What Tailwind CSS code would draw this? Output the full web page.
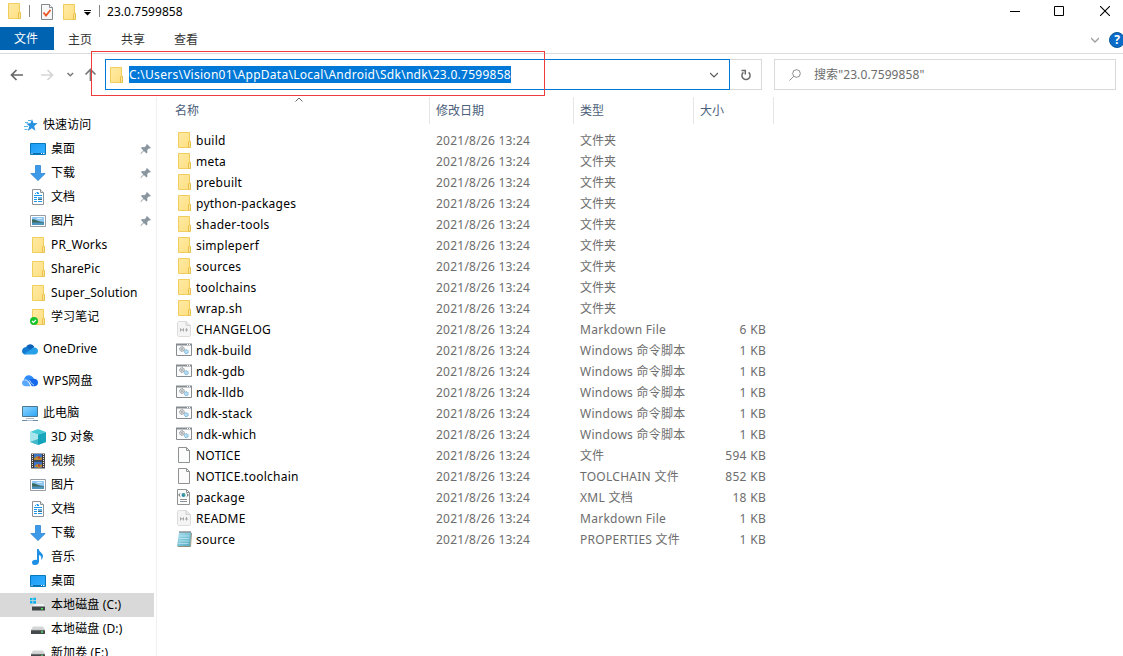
<!DOCTYPE html>
<html lang="zh-CN">
<head>
  <meta charset="utf-8" />
  <meta name="viewport" content="width=device-width, initial-scale=1.0" />
  <title>23.0.7599858</title>
  <script src="https://cdn.jsdelivr.net/npm/@tailwindcss/browser@4"></script>
</head>
<body class="bg-white font-['Noto_Sans','Noto_Sans_CJK_SC',sans-serif] text-[12px] text-black">
  <!-- icon sprites -->
  <svg class="absolute w-0 h-0">
    <defs>
      <linearGradient id="gFolder" x1="0" y1="0" x2="1" y2="1"><stop offset="0" stop-color="#ffeaa4" /><stop offset="1" stop-color="#ffdf82" /></linearGradient>
      <linearGradient id="gDesk" x1="0" y1="0" x2="1" y2="1"><stop offset="0" stop-color="#1a9bf5" /><stop offset="1" stop-color="#35b0ff" /></linearGradient>
      <linearGradient id="gScreen" x1="0" y1="0" x2="1" y2="1"><stop offset="0" stop-color="#8fd6ff" /><stop offset="1" stop-color="#2ba4f5" /></linearGradient>
      <linearGradient id="gPad" x1="0" y1="0" x2="1" y2="1"><stop offset="0" stop-color="#a9e0f0" /><stop offset="1" stop-color="#4fa6bd" /></linearGradient>
    </defs>
    <symbol id="folder" viewBox="0 0 16 16">
      <path d="M2.500.5h11v15h-11z" fill="url(#gFolder)" stroke="#f0cd5c" />
      <path d="M12.500 15.500v-5.500l.7-.7h1.300v6.200z" fill="#ffe597" stroke="#e6c04c" />
    </symbol>
    <symbol id="folder-ok" viewBox="0 0 16 16">
      <use href="#folder" />
      <circle cx="4" cy="12" r="4" fill="#16c22c" />
      <path d="M2 12l1.500 1.500L6 10.800" fill="none" stroke="#fff" stroke-width="1.200" />
    </symbol>
    <symbol id="star" viewBox="0 0 16 16">
      <path d="M10 2l1.400 4 4.300.2-3.500 2.700 1.200 4.800-3.600-2.500-4 2.800 1.500-4.800-3-2.700 4.100-.2z" fill="#2791e0" />
      <path d="M6 3.500h3M3 5.500h3M2 9.500h4M2.500 12.500h3" stroke="#58b4e2" />
    </symbol>
    <symbol id="desktop" viewBox="0 0 16 16">
      <path d="M.5 2.500h15v11H.5z" fill="url(#gDesk)" stroke="#0878bd" />
      <path d="M1 12.500h14" stroke="#086fae" />
      <path d="M1.500 12.500h1M11 12.500h1M13 12.500h1.500" stroke="#fff" />
    </symbol>
    <symbol id="down" viewBox="0 0 16 16">
      <path d="M5.500.5h5v8h4.700L8 15.600.8 8.500h4.700z" fill="#3d9ae8" stroke="#2c84d2" stroke-width=".8" />
    </symbol>
    <symbol id="doc" viewBox="0 0 16 16">
      <path d="M2.500.5h8l3 3v12h-11z" fill="#fff" stroke="#8d9499" />
      <path d="M10.500.5v3h3" fill="#eee" stroke="#8d9499" />
      <path d="M6.500 3.500h2M5 4.500h1M7 4.500h2M4 6.500h8M4 8.500h3M4 10.500h3M4 12.500h3" stroke="#1b9af0" />
      <path d="M8 8h4v2H8z" fill="#62b4ea" /><path d="M8 10.500h4" stroke="#4b6770" /><path d="M8 12.500h4" stroke="#1b9af0" />
    </symbol>
    <symbol id="picture" viewBox="0 0 16 16">
      <path d="M.5 2.500h15v11H.5z" fill="#fff" stroke="#979da2" />
      <path d="M2 4h12v8H2z" fill="#8fc7f5" />
      <path d="M2 6.500c3-1 5 2.200 12 2.500v1H2z" fill="#3c6b62" /><path d="M2 9.500h12V12H2z" fill="#4c93bd" />
      <path d="M7 5.500h5" stroke="#d8ecfc" />
    </symbol>
    <symbol id="onedrive" viewBox="0 0 16 16">
      <path d="M4 6.500C5.500 2.500 10.500 2 12.300 6L9 10 2 8z" fill="#0b62b8" />
      <path d="M3.500 6.200C1.500 6.300 0 8 0 10c0 2.300 1.600 3.500 3.500 3.500L11 10 6 6.800c-.8-.4-1.600-.6-2.500-.6z" fill="#127ad1" />
      <path d="M12.500 6.500c-1.600 0-2.500.8-3.300 1.800L2 13c.5.300 1 .5 1.500.5h9c2 0 3.500-1.300 3.500-3.500 0-2-1.600-3.500-3.500-3.500z" fill="#279fe8" />
    </symbol>
    <symbol id="wps" viewBox="0 0 16 16">
      <path d="M2 7C2.300 1.500 9 .5 11.300 4.800 12 6 12 7 12 7L7 8z" fill="#2f8cf8" />
      <path d="M12.500 5.800C15 6 16 7.800 16 9.700c0 2-1.500 3.500-3.500 3.500H9.800L6.500 7.500C8 5 10.500 5.700 12.500 5.800z" fill="#1569ec" />
      <path d="M3.500 6.500C1.200 6.700 0 8.200 0 10c0 2 1.500 3.200 3.500 3.200h5.200L6.500 8C5.700 6.900 4.600 6.400 3.500 6.500z" fill="#58a8fb" />
      <path d="M2.500 7c3.500-.8 4.500 3.500 6.500 6.300M7.500 7c1 2 2 4 4.500 5.200" stroke="#fff" fill="none" stroke-width=".7" />
    </symbol>
    <symbol id="pc" viewBox="0 0 16 16">
      <path d="M.5 1.500h15v10H.5z" fill="url(#gScreen)" stroke="#4b7891" />
      <path d="M4 13.500h8" stroke="#aebbc4" /><path d="M0 15.500h16" stroke="#6d8ca1" /><path d="M5 15.500h6" stroke="#b4c4cf" />
    </symbol>
    <symbol id="cube" viewBox="0 0 16 16">
      <path d="M8 0l8 3-8 2.500L0 3z" fill="#45cbd6" /><path d="M0 3l8 2.500V16l-8-3z" fill="#a6e6ec" />
      <path d="M16 3L8 5.500V16l8-3z" fill="#18a6bd" /><path d="M0 13l8-3 8 3-8 3z" fill="#0d9fba" opacity=".65" />
    </symbol>
    <symbol id="video" viewBox="0 0 16 16">
      <path d="M1 .5h14v15H1z" fill="#4b4648" />
      <path d="M2.500 1v14M13.500 1v14" stroke="#e6e6e6" stroke-dasharray="1 1" />
      <path d="M4 1h8v6.500H4zM4 8.500h8V15H4z" fill="#3d73c5" />
      <path d="M4 5.500l3-2.500 2 2 3-1v3H4zM4 13.500l3-2.500 3 1 2-1v3l-3 1z" fill="#b98a32" /><path d="M8 3.500h2v2H8zM8 11.500h2v2H8z" fill="#c53a2c" />
      <path d="M3.500 1v14M12.500 1v14M3 8h10" stroke="#3b3637" fill="none" />
    </symbol>
    <symbol id="music" viewBox="0 0 16 16">
      <path d="M7 0h1.700c.4 3 4.300 4 4.300 7 0 1.700-.8 3-2 4 .8-2.700.3-4.400-2-5v6.500C9 15 6.800 16 5 16s-3-1-3-2.600C2 11.500 4.400 10.300 7 11z" fill="#1e90e6" />
    </symbol>
    <symbol id="disk" viewBox="0 0 16 16">
      <path d="M3 5.500h10l2 3.500H1z" fill="#d3d5d6" /><path d="M1 9h14v4H1z" fill="#45494b" />
      <path d="M1 9.400h14" stroke="#777b7d" stroke-width=".8" /><path d="M11 11h2" stroke="#4be65b" stroke-width="1.500" />
    </symbol>
    <symbol id="disk-win" viewBox="0 0 16 16">
      <path d="M4 7h9l2 2.500H2z" fill="#f1f2f3" /><path d="M2 9.500h13v4H2z" fill="#3f4446" /><path d="M11 11.700h2" stroke="#4be65b" stroke-width="1.500" />
      <path d="M0 1h2.500v2.300H0zM3.300.7H6v2.600H3.300zM0 4.100h2.500v2.300H0zM3.300 4.100H6v2.600H3.300z" fill="#10b3ee" />
    </symbol>
    <symbol id="pin" viewBox="0 0 12 12">
      <path d="M7 1l4 4-1.300.6-.9-.1-1.600 1.600.2 2.300-1 1.100-2.500-2.600L1 11l-.5-.4L3.300 7.500 1 5l1-1 2.400.3L6.200 2.800 6.200 1.800z" fill="#8a969f" />
    </symbol>
    <symbol id="md" viewBox="0 0 16 16">
      <path d="M1.500 2c0-1 .5-1.500 1.500-1.500h7l4.500 4V14c0 1-.5 1.500-1.500 1.500H3c-1 0-1.500-.5-1.500-1.500z" fill="#f4f4f4" stroke="#dcdcdc" />
      <path d="M10 .5v4h4.500" fill="#e7e7e7" stroke="#d3d3d3" />
      <path d="M4.500 10.500v-3l1.500 2 1.500-2v3M10.500 7v3.500M9 9h3" fill="none" stroke="#a9a9a9" />
    </symbol>
    <symbol id="bat" viewBox="0 0 16 16">
      <path d="M.5 2.500h15v11H.5z" fill="#fcfcfc" stroke="#868c90" /><path d="M0 2.500h16" stroke="#868c90" stroke-width="2" /><path d="M11 2.500h1M13 2.500h1" stroke="#fff" />
      <circle cx="6" cy="7" r="2.300" fill="#dfe1e2" stroke="#7d8488" stroke-dasharray="1.200 .4" /><circle cx="6" cy="7" r=".8" fill="#7d8488" />
      <circle cx="10.300" cy="9.700" r="2" fill="#b5dcf2" stroke="#6fadd2" stroke-dasharray="1.200 .4" />
    </symbol>
    <symbol id="file" viewBox="0 0 16 16">
      <path d="M2.500.5h8l3 3v12h-11z" fill="#fcfcfc" stroke="#8e9293" /><path d="M10.500.5v3h3" fill="none" stroke="#8e9293" />
    </symbol>
    <symbol id="xml" viewBox="0 0 16 16">
      <path d="M1.500.5h9l3 3v12h-12z" fill="#fcfcfc" stroke="#8e9293" /><path d="M10.500.5v3h3" fill="none" stroke="#8e9293" />
      <path d="M4 4.500L2.800 6 4 7.500M11 4.500L12.200 6 11 7.500" fill="none" stroke="#4e5558" /><circle cx="7.500" cy="6" r="2" fill="#2d8bb5" /><path d="M7 5h1.500v1.500" stroke="#4ab26a" fill="none" />
      <path d="M4 10.500h7M4 12.500h7" stroke="#8a9092" />
    </symbol>
    <symbol id="notepad" viewBox="0 0 16 16">
      <path d="M3 1.500h12.500L14 15.500H1z" fill="url(#gPad)" /><path d="M15.500 2L14.500 15.500H2" fill="none" stroke="#8a7d62" stroke-width=".8" />
      <path d="M3.500 1h11" stroke="#4e5a60" stroke-width="2" stroke-dasharray="1 1" />
      <path d="M3.300 5h10M3 7.500h10M2.700 10h10M2.400 12.500h10" stroke="#d5f1f8" stroke-width=".6" />
    </symbol>
    <symbol id="check" viewBox="0 0 16 16">
      <path d="M2.500.5h8l3 3v12h-11z" fill="#f7f7f7" stroke="#84898c" /><path d="M10.500.5v3h3" fill="#fff" stroke="#84898c" />
      <path d="M4.500 8.500l2.500 3 4.500-5.500" fill="none" stroke="#ec5522" stroke-width="1.800" />
    </symbol>
  </svg>

  <div class="relative flex flex-col w-[1123px] h-[656px] overflow-hidden whitespace-nowrap">
    <header class="h-[27px] shrink-0 flex justify-between pl-1.5">
      <div class="flex items-center h-6">
        <svg class="w-4 h-4 -mt-0.5"><use href="#folder" /></svg>
        <span class="w-px h-3 bg-[#858585] ml-[7px] -mt-0.5"></span>
        <svg class="w-4 h-4 ml-[9px]"><use href="#check" /></svg>
        <svg class="w-4 h-4 ml-1.5"><use href="#folder" /></svg>
        <svg class="w-[7px] h-1.5 ml-[7px] mt-0.5" viewBox="0 0 7 6"><path d="M0 .5h7" stroke="#111" /><path d="M0 2h7L3.500 5.500z" /></svg>
        <span class="w-px h-3 bg-[#858585] ml-2 -mt-0.5"></span>
        <span class="ml-[7px] tracking-[0.05px]">23.0.7599858</span>
      </div>
      <div class="flex pt-1.5 pr-[13px] gap-[35px]">
        <svg class="w-2.5 h-2.5 -mr-px" viewBox="0 0 10 10"><path d="M0 5.500h10" stroke="#000" /></svg>
        <svg class="w-2.5 h-2.5 mr-px" viewBox="0 0 10 10"><path d="M.5.5h9v9h-9z" fill="none" stroke="#000" /></svg>
        <svg class="w-2.5 h-2.5" viewBox="0 0 10 10"><path d="M0 0l10 10M10 0L0 10" stroke="#000" stroke-width="1.100" /></svg>
      </div>
    </header>

    <nav class="h-[27px] shrink-0 flex border-b border-[#dadbdc] text-[#333]">
      <span class="w-[54px] h-[23px] bg-[#0063b1] text-white flex items-center justify-center pr-0.5">文件</span>
      <span class="h-[25px] flex items-center pl-3.5">主页</span>
      <span class="h-[25px] flex items-center pl-[29px]">共享</span>
      <span class="h-[25px] flex items-center pl-[29px]">查看</span>
      <div class="ml-auto flex items-start pt-[5px]">
        <svg class="w-2 h-5 mr-2.5 -mt-px" viewBox="0 0 8 20"><path d="M0 7l4 4 4-4" fill="none" stroke="#a0a0a0" stroke-width="1.300" /></svg>
        <div class="w-3.5 h-4 overflow-hidden">
          <div class="w-4 h-4 rounded-full bg-[#0a6cc8] border border-[#0c5899] text-white font-bold leading-[14px] text-center">?</div>
        </div>
      </div>
    </nav>

    <div class="h-[43px] shrink-0 flex items-start pt-[5px] text-[#6d6d6d]">
      <div class="w-[105px] h-8 flex items-center">
        <svg class="w-[105px] h-8" viewBox="0 0 105 32" fill="none" stroke-width="1.700">
          <path d="M23 16H12M16.500 11L11.500 16l5 5" stroke="#666" />
          <path d="M41 16h11M47.500 11l5 5-5 5" stroke="#d5d5d5" />
          <path d="M67.500 14l2.800 2.800 2.800-2.800" stroke="#777" stroke-width="1.500" />
          <path d="M90.500 22V11M85.500 15.500l5-5 5 5" stroke="#777" />
        </svg>
      </div>
      <div class="w-[625px] h-[31px] border border-[#0078d7] flex items-center pl-0.5 pr-[11px]">
        <svg class="w-4 h-4"><use href="#folder" /></svg>
        <span id="address" class="ml-[5px] h-[17px] leading-[17px] bg-[#0078d7] text-white tracking-[0.27px]">C:\Users\Vision01\AppData\Local\Android\Sdk\ndk\23.0.7599858</span>
        <svg class="w-2 h-5 ml-auto" viewBox="0 0 8 20"><path d="M0 8l4 4 4-4" fill="none" stroke="#555" stroke-width="1.200" /></svg>
      </div>
      <div class="w-8 h-[31px] border border-l-0 border-[#d9d9d9] flex items-center justify-center">
        <svg class="w-3 h-3" viewBox="0 0 12 12" fill="none" stroke="#6a6a6a" stroke-width="1.500"><path d="M3.400 3.300A4.100 4.100 0 1 0 8.600 3.300M1.500 1.400H5.300V5.500" /></svg>
      </div>
      <div class="w-[342px] h-[31px] ml-3 border border-[#d9d9d9] flex items-center pl-3.5">
        <svg class="w-3 h-3" viewBox="0 0 12 12" fill="none" stroke="#8b8b8b"><circle cx="7.500" cy="4.500" r="3.800" /><path d="M4.800 7.200L.5 11.500" /></svg>
        <span class="ml-[13px] tracking-[0.1px]">搜索"23.0.7599858"</span>
      </div>
    </div>

    <div class="flex-1 min-h-0 flex">
      <aside id="sidebar" class="w-[157px] shrink-0 pt-4 border-r border-[#f0f0f0] overflow-hidden"></aside>
      <main class="flex-1">
        <div class="relative h-[27px] flex items-center text-[#4c607a]">
          <svg class="absolute left-[138px] top-0 w-2 h-[5px]" viewBox="0 0 8 5"><path d="M.5 4.500L4 1l3.500 3.500" fill="none" stroke="#666" /></svg>
          <span class="w-[273px] h-full pl-[18px] leading-[27px] border-r border-[#e5e5e5]">名称</span>
          <span class="w-36 h-full pl-1.5 leading-[27px] border-r border-[#e5e5e5]">修改日期</span>
          <span class="w-[120px] h-full pl-1.5 leading-[27px] border-r border-[#e5e5e5]">类型</span>
          <span class="w-20 h-full pl-1.5 leading-[27px] border-r border-[#e5e5e5]">大小</span>
        </div>
        <div id="files" class="pt-1.5"></div>
      </main>
    </div>

    <!-- highlight around the path -->
    <div class="absolute left-[91px] top-[51px] w-[454px] h-[45px] border border-[#ee3b3b]"></div>
  </div>

  <script>
    const places = [
      { icon: 'star', name: '快速访问', root: true },
      { icon: 'desktop', name: '桌面', pin: true },
      { icon: 'down', name: '下载', pin: true },
      { icon: 'doc', name: '文档', pin: true },
      { icon: 'picture', name: '图片', pin: true },
      { icon: 'folder', name: 'PR_Works' },
      { icon: 'folder', name: 'SharePic' },
      { icon: 'folder', name: 'Super_Solution' },
      { icon: 'folder-ok', name: '学习笔记' },
      { icon: 'onedrive', name: 'OneDrive', root: true },
      { icon: 'wps', name: 'WPS网盘', root: true },
      { icon: 'pc', name: '此电脑', root: true },
      { icon: 'cube', name: '3D 对象' },
      { icon: 'video', name: '视频' },
      { icon: 'picture', name: '图片' },
      { icon: 'doc', name: '文档' },
      { icon: 'down', name: '下载' },
      { icon: 'music', name: '音乐' },
      { icon: 'desktop', name: '桌面' },
      { icon: 'disk-win', name: '本地磁盘 (C:)', active: true },
      { icon: 'disk', name: '本地磁盘 (D:)' },
      { icon: 'disk', name: '新加卷 (E:)' },
    ];

    const files = [
      ['folder', 'build', '文件夹', ''],
      ['folder', 'meta', '文件夹', ''],
      ['folder', 'prebuilt', '文件夹', ''],
      ['folder', 'python-packages', '文件夹', ''],
      ['folder', 'shader-tools', '文件夹', ''],
      ['folder', 'simpleperf', '文件夹', ''],
      ['folder', 'sources', '文件夹', ''],
      ['folder', 'toolchains', '文件夹', ''],
      ['folder', 'wrap.sh', '文件夹', ''],
      ['md', 'CHANGELOG', 'Markdown File', '6 KB'],
      ['bat', 'ndk-build', 'Windows 命令脚本', '1 KB'],
      ['bat', 'ndk-gdb', 'Windows 命令脚本', '1 KB'],
      ['bat', 'ndk-lldb', 'Windows 命令脚本', '1 KB'],
      ['bat', 'ndk-stack', 'Windows 命令脚本', '1 KB'],
      ['bat', 'ndk-which', 'Windows 命令脚本', '1 KB'],
      ['file', 'NOTICE', '文件', '594 KB'],
      ['file', 'NOTICE.toolchain', 'TOOLCHAIN 文件', '852 KB'],
      ['xml', 'package', 'XML 文档', '18 KB'],
      ['md', 'README', 'Markdown File', '1 KB'],
      ['notepad', 'source', 'PROPERTIES 文件', '1 KB'],
    ];

    document.getElementById('sidebar').innerHTML = places.map((place, index) => `
      <div class="h-6 w-[154px] flex items-center ${place.root ? 'pl-[22px]' : 'pl-[30px]'} ${place.root && index ? 'mt-2' : ''} ${place.active ? 'bg-[#d9d9d9]' : ''}">
        <svg class="w-4 h-4 shrink-0"><use href="#${place.icon}" /></svg>
        <span class="ml-[5px] -mt-px tracking-[0.12px]">${place.name}</span>
        ${place.pin ? '<svg class="w-3 h-3 ml-auto mr-0.5"><use href="#pin" /></svg>' : ''}
      </div>
    `).join('');

    document.getElementById('files').innerHTML = files.map(([icon, name, type, size]) => `
      <div class="h-[21px] flex items-center leading-[21px] text-[#6d6d6d]">
        <svg class="w-4 h-4 ml-[19px] -mt-px"><use href="#${icon}" /></svg>
        <span class="w-60 ml-1 text-black tracking-[0.25px]">${name}</span>
        <span class="w-36 tracking-[0.23px]">2021/8/26 13:24</span>
        <span class="w-[113px] ${/^[A-Z]/.test(type) ? 'tracking-[0.27px]' : ''}">${type}</span>
        <span class="w-[73px] text-right tracking-[0.3px]">${size}</span>
      </div>
    `).join('');
  </script>
</body>
</html>
